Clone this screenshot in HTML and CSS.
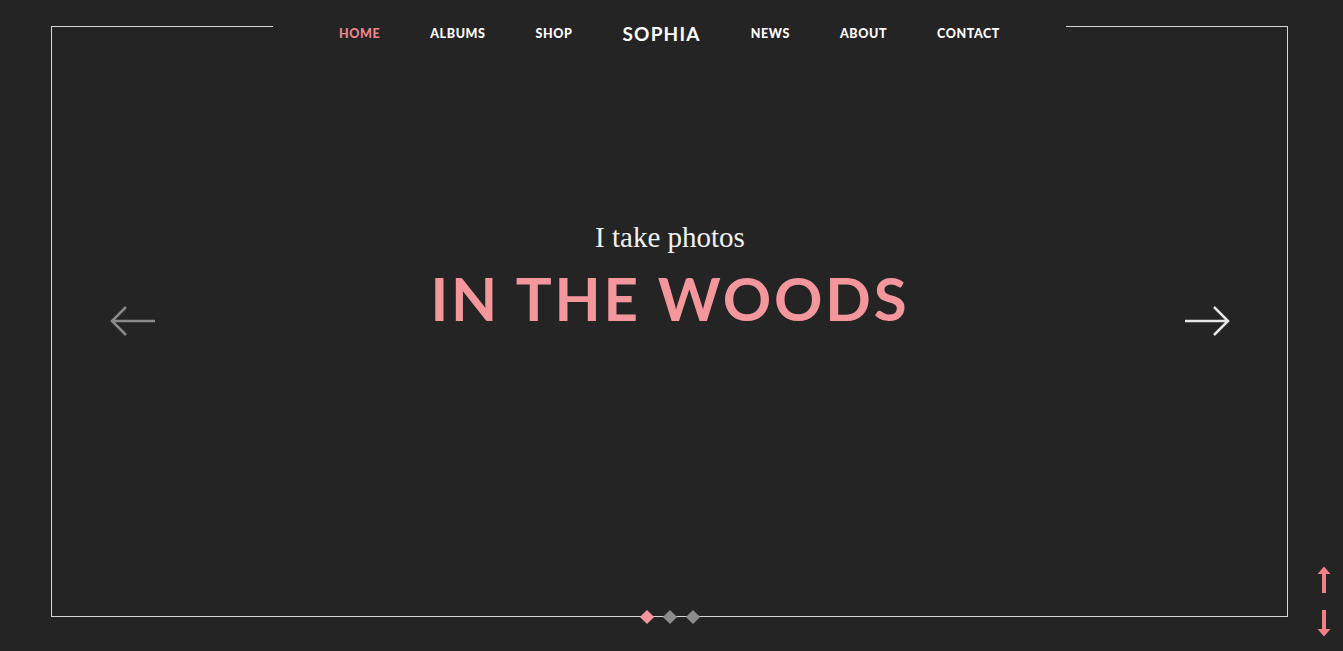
FILE: index.html
```html
<!DOCTYPE html>
<html lang="en">
<head>
<meta charset="utf-8">
<title>Sophia</title>
<link rel="stylesheet" href="styles.css">
</head>
<body>
<div class="page">
  <div class="frame">
    <header class="top">
      <span class="rule"></span>
      <nav class="nav">
        <a class="nav-link active" href="#">HOME</a>
        <a class="nav-link" href="#">ALBUMS</a>
        <a class="nav-link" href="#">SHOP</a>
        <a class="brand" href="#">SOPHIA</a>
        <a class="nav-link" href="#">NEWS</a>
        <a class="nav-link" href="#">ABOUT</a>
        <a class="nav-link" href="#">CONTACT</a>
      </nav>
      <span class="rule"></span>
    </header>
    <main class="hero">
      <button class="arrow arrow-prev" aria-label="Previous">
        <svg width="46" height="32" viewBox="0 0 46 32"><path d="M45 16H2M16 2L2 16l14 14" fill="none" stroke="currentColor" stroke-width="2.5"/></svg>
      </button>
      <div class="hero-text">
        <p class="kicker">I take photos</p>
        <h1 class="title">IN THE WOODS</h1>
      </div>
      <button class="arrow arrow-next" aria-label="Next">
        <svg width="46" height="32" viewBox="0 0 46 32"><path d="M1 16h43M30 2l14 14-14 14" fill="none" stroke="currentColor" stroke-width="2.5"/></svg>
      </button>
    </main>
    <div class="dots">
      <span class="dot on"></span>
      <span class="dot"></span>
      <span class="dot"></span>
    </div>
  </div>
  <div class="scroll">
    <svg width="14" height="27" viewBox="0 0 14 27"><path d="M7 0.5L0.5 8h4.5v19h4V8h4.5z" fill="#ef8188"/></svg>
    <svg width="14" height="27" viewBox="0 0 14 27"><path d="M7 26.5L0.5 19h4.5V0h4v19h4.5z" fill="#ef8188"/></svg>
  </div>
</div>
</body>
</html>
```
FILE: styles.css
```css
* { box-sizing: border-box; }
html, body { margin: 0; height: 100%; }
body {
  background: #242424;
  font-family: Lato, "Noto Sans", sans-serif;
  color: #fff;
  overflow: hidden;
}
.page {
  height: 651px;
  padding: 26px 55px 34px 51px;
  position: relative;
}
.frame {
  position: relative;
  height: 100%;
  border: 1px solid #d6d6d6;
  border-top: none;
  display: flex;
  flex-direction: column;
}
.top {
  display: flex;
  align-items: flex-start;
  height: 20px;
  margin-left: -1px;
  margin-right: -1px;
}
.rule {
  width: 222px;
  height: 1px;
  background: #d6d6d6;
}
.nav {
  flex: 1;
  display: flex;
  justify-content: center;
  align-items: center;
  gap: 50px;
  height: 14px;
}
.nav a { text-decoration: none; }
.nav-link {
  color: #fff;
  font-size: 12.5px;
  font-weight: 900;
  letter-spacing: 0.6px;
}
.nav-link.active { color: #f0868c; }
.brand {
  color: #fff;
  font-size: 19px;
  font-weight: 700;
  letter-spacing: 1.2px;
}
.hero {
  flex: 1;
  display: flex;
  align-items: center;
  padding: 0 57px 20px 58px;
}
.arrow {
  background: none;
  border: 0;
  padding: 0;
  width: 46px;
  height: 32px;
  display: flex;
}
.arrow-prev { color: #8a8a8a; }
.arrow-next { color: #e6e6e6; }
.hero-text {
  flex: 1;
  text-align: center;
  margin-bottom: 93px;
}
.kicker {
  margin: 0;
  font-family: "Liberation Serif", "DejaVu Serif", serif;
  font-size: 29px;
  color: #f2f2f2;
  line-height: 30px;
}
.title {
  margin: 16px 0 0;
  font-size: 60px;
  line-height: 60px;
  font-weight: 700;
  letter-spacing: 2.8px;
  color: #f4979d;
}
.dots {
  position: absolute;
  left: 50%;
  bottom: -6px;
  transform: translateX(-28px);
  display: flex;
  gap: 12px;
}
.dot {
  width: 10px;
  height: 10px;
  margin: 0.5px;
  background: #8c8c8c;
  transform: rotate(45deg);
}
.dot.on { background: #f4979d; }
.scroll {
  position: absolute;
  right: 12px;
  bottom: 14px;
  display: flex;
  flex-direction: column;
  gap: 17px;
}
.scroll svg { display: block; }
```
